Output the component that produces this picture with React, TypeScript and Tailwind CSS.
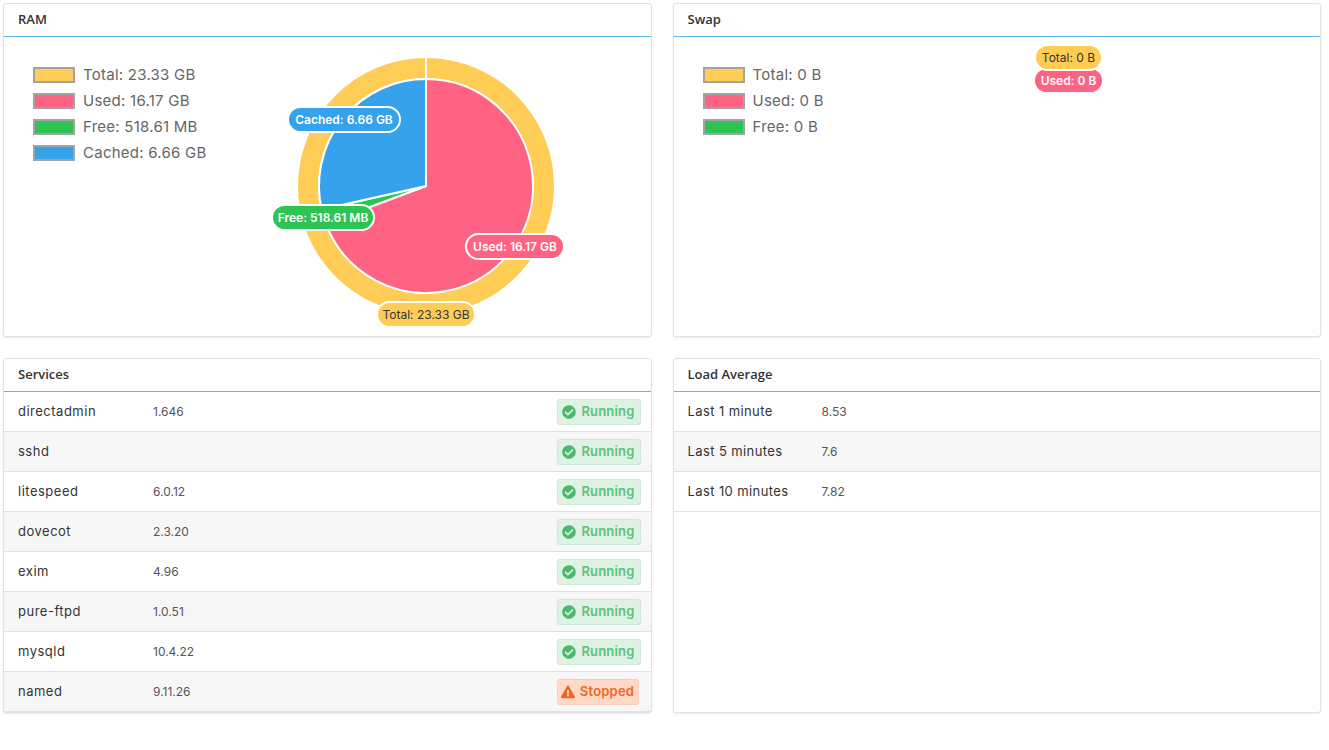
import React from 'react';
import { FaCheckCircle, FaExclamationTriangle } from 'react-icons/fa';

const YELLOW = '#ffcd56';
const PINK = '#ff6384';
const GREEN = '#2ec454';
const BLUE = '#36a2eb';

type LegendItem = { label: string; color: string };

const Legend: React.FC<{ items: LegendItem[] }> = ({ items }) => (
  <div className="w-[262px] shrink-0 pl-[29px] pt-[30px] flex flex-col gap-[11px]">
    {items.map((it) => (
      <div key={it.label} className="flex items-center gap-[8px] h-[15px]">
        <span className="w-[42px] h-[16px] border-2 border-[#a3a3a3]" style={{ background: it.color }} />
        <span className="text-[15px] text-[#666] leading-none tracking-[0.25px]">{it.label}</span>
      </div>
    ))}
  </div>
);

const Card: React.FC<{ title: string; children: React.ReactNode; className?: string }> = ({
  title,
  children,
  className = '',
}) => (
  <div className={`bg-white border border-[#e2e2e2] rounded-[3px] shadow-[0_1px_2px_rgba(0,0,0,0.08)] flex flex-col ${className}`}>
    <div className="h-[33px] px-[14px] flex items-center border-b border-[#5cb6ef] font-['Open_Sans',sans-serif] text-[13px] font-semibold text-[#333]">
      {title}
    </div>
    {children}
  </div>
);

// point on circle, angle in degrees clockwise from 12 o'clock
const pt = (cx: number, cy: number, r: number, a: number) => {
  const rad = (a * Math.PI) / 180;
  return [cx + r * Math.sin(rad), cy - r * Math.cos(rad)];
};

const slice = (cx: number, cy: number, r: number, a0: number, a1: number) => {
  const [x0, y0] = pt(cx, cy, r, a0);
  const [x1, y1] = pt(cx, cy, r, a1);
  const large = a1 - a0 > 180 ? 1 : 0;
  return `M${cx},${cy} L${x0},${y0} A${r},${r} 0 ${large} 1 ${x1},${y1} Z`;
};

const Pill: React.FC<{ x: number; y: number; w: number; text: string; fill: string; dark?: boolean }> = ({
  x,
  y,
  w,
  text,
  fill,
  dark,
}) => (
  <g>
    <rect x={x} y={y} width={w} height={25} rx={12.5} fill={fill} stroke="#fff" strokeWidth={2} />
    <text
      x={x + w / 2}
      y={y + 17}
      textAnchor="middle"
      fontSize={12}
      fontWeight={dark ? 400 : 600}
      fill={dark ? '#333' : '#fff'}
      fontFamily="Inter, sans-serif"
    >
      {text}
    </text>
  </g>
);

const RamChart = () => {
  const cx = 160;
  const cy = 149;
  return (
    <svg width={320} height={299} className="shrink-0">
      <circle cx={cx} cy={cy} r={128} fill={YELLOW} />
      <line x1={cx} y1={cy - 129} x2={cx} y2={cy - 100} stroke="#fff" strokeWidth={2} />
      <circle cx={cx} cy={cy} r={108} fill="#fff" />
      <path d={slice(cx, cy, 107, 0, 249.5)} fill={PINK} stroke="#fff" strokeWidth={2} strokeLinejoin="round" />
      <path d={slice(cx, cy, 107, 249.5, 257.3)} fill={GREEN} stroke="#fff" strokeWidth={2} strokeLinejoin="round" />
      <path d={slice(cx, cy, 107, 257.3, 360)} fill={BLUE} stroke="#fff" strokeWidth={2} strokeLinejoin="round" />
      <Pill x={22} y={70} w={112} text="Cached: 6.66 GB" fill={BLUE} />
      <Pill x={6} y={168} w={102} text="Free: 518.61 MB" fill={GREEN} />
      <Pill x={200} y={197} w={98} text="Used: 16.17 GB" fill={PINK} />
      <Pill x={111} y={265} w={98} text="Total: 23.33 GB" fill={YELLOW} dark />
    </svg>
  );
};

const SwapChart = () => (
  <svg width={320} height={299} className="shrink-0">
    <Pill x={98} y={31} w={69} text="Used: 0 B" fill={PINK} />
    <Pill x={99} y={8} w={67} text="Total: 0 B" fill={YELLOW} dark />
  </svg>
);

const services = [
  { name: 'directadmin', version: '1.646', ok: true },
  { name: 'sshd', version: '', ok: true },
  { name: 'litespeed', version: '6.0.12', ok: true },
  { name: 'dovecot', version: '2.3.20', ok: true },
  { name: 'exim', version: '4.96', ok: true },
  { name: 'pure-ftpd', version: '1.0.51', ok: true },
  { name: 'mysqld', version: '10.4.22', ok: true },
  { name: 'named', version: '9.11.26', ok: false },
];

const loads = [
  { label: 'Last 1 minute', value: '8.53' },
  { label: 'Last 5 minutes', value: '7.6' },
  { label: 'Last 10 minutes', value: '7.82' },
];

const StatusBadge: React.FC<{ ok: boolean }> = ({ ok }) =>
  ok ? (
    <span className="h-[26px] w-[84px] flex items-center justify-center gap-[5px] rounded-[3px] bg-[#ddf2e4] border border-[#cbe9d4] text-[#5fbf7a] text-[13px] font-semibold tracking-[0.2px]">
      <FaCheckCircle className="text-[#4cb86a] w-[14px] h-[14px]" />
      Running
    </span>
  ) : (
    <span className="h-[26px] w-[82px] mr-[2px] flex items-center justify-center gap-[5px] rounded-[3px] bg-[#ffd9c5] border border-[#f6cdb6] text-[#f2661e] text-[13px] font-semibold tracking-[0.2px]">
      <FaExclamationTriangle className="text-[#f2661e] w-[14px] h-[14px]" />
      Stopped
    </span>
  );

export default function App() {
  return (
    <div className="w-[1329px] h-[750px] bg-white font-['Inter',sans-serif] pl-[3px] pr-[8px] pt-[3px]">
      <div className="grid grid-cols-2 gap-x-[21px] gap-y-[21px] grid-rows-[334px_355px]">
        <Card title="RAM">
          <div className="flex flex-1">
            <Legend
              items={[
                { label: 'Total: 23.33 GB', color: YELLOW },
                { label: 'Used: 16.17 GB', color: PINK },
                { label: 'Free: 518.61 MB', color: GREEN },
                { label: 'Cached: 6.66 GB', color: BLUE },
              ]}
            />
            <RamChart />
          </div>
        </Card>
        <Card title="Swap">
          <div className="flex flex-1">
            <Legend
              items={[
                { label: 'Total: 0 B', color: YELLOW },
                { label: 'Used: 0 B', color: PINK },
                { label: 'Free: 0 B', color: GREEN },
              ]}
            />
            <SwapChart />
          </div>
        </Card>
        <Card title="Services">
          <div className="flex flex-col">
            {services.map((s, i) => (
              <div
                key={s.name}
                className={`h-[40px] flex items-center pl-[14px] pr-[10px] border-b border-[#e1e1e1] ${i % 2 === 1 ? 'bg-[#f7f7f7]' : 'bg-white'}`}
              >
                <span className="w-[135px] text-[13px] text-[#333] tracking-[0.5px]">{s.name}</span>
                <span className="flex-1 text-[12px] text-[#555]">{s.version}</span>
                <StatusBadge ok={s.ok} />
              </div>
            ))}
          </div>
        </Card>
        <Card title="Load Average">
          <div className="flex flex-col">
            {loads.map((l, i) => (
              <div
                key={l.label}
                className={`h-[40px] flex items-center pl-[14px] border-b border-[#e1e1e1] ${i % 2 === 1 ? 'bg-[#f7f7f7]' : 'bg-white'}`}
              >
                <span className="w-[134px] text-[13px] text-[#333] tracking-[0.4px]">{l.label}</span>
                <span className="text-[12px] text-[#555]">{l.value}</span>
              </div>
            ))}
          </div>
        </Card>
      </div>
    </div>
  );
}
